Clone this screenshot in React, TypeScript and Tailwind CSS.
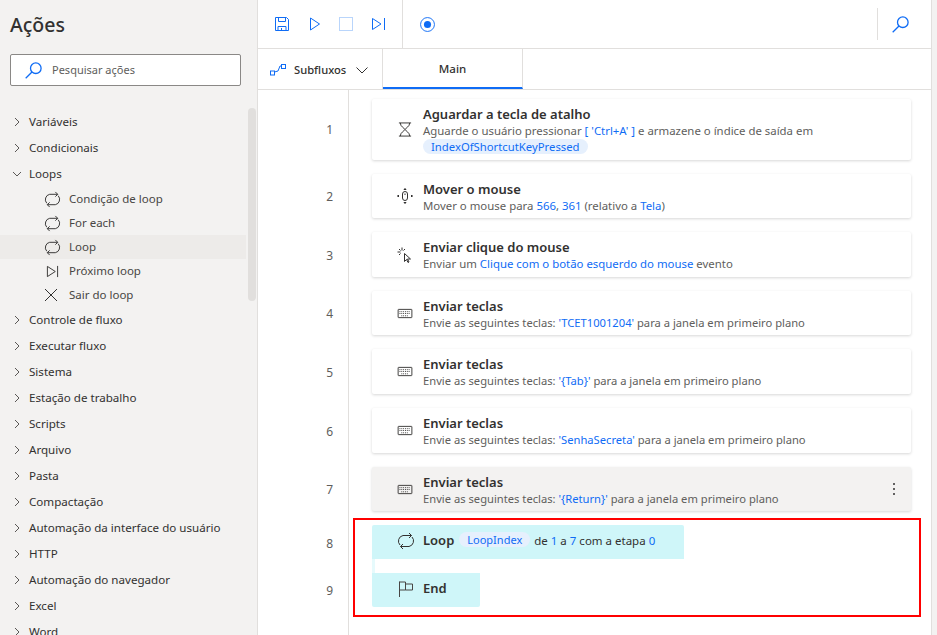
import type { ReactNode } from "react";

const LoopIcon = ({ className = "" }: { className?: string }) => (
  <svg viewBox="0 0 18 18" fill="none" stroke="currentColor" strokeWidth="1" className={className}>
    <path d="M3 13A5.700 5.700 0 0 1 6 3.500H14.500" />
    <path d="M12 1l2.500 2.500L12 6" />
    <path d="M15 5A5.700 5.700 0 0 1 12 14.500H3.500" />
    <path d="M6 12l-2.500 2.500L6 17" />
  </svg>
);

const SearchIcon = ({ className = "" }: { className?: string }) => (
  <svg viewBox="0 0 17 17" fill="none" stroke="#0f6cf5" strokeWidth="1.300" className={className}>
    <circle cx="10.800" cy="6.200" r="5.300" />
    <path d="M7 10L0.700 16.300" />
  </svg>
);

const KeyboardIcon = () => (
  <svg viewBox="0 0 16 12" fill="none" stroke="#323130" strokeWidth="1" className="h-[11px] w-[16px]">
    <rect x="0.500" y="1.500" width="15" height="9" rx="0.500" />
    <path d="M2 4h12M2 6h12M4 8.500h8" strokeDasharray="1 1" />
  </svg>
);

const HourglassIcon = () => (
  <svg viewBox="0 0 14 16" fill="none" stroke="#323130" strokeWidth="1" className="h-[15px] w-[14px]">
    <path d="M0.500 1h13M0.500 15h13M2 1c0 4 4 5 5 7 1-2 5-3 5-7M2 15c0-4 4-5 5-7 1 2 5 3 5 7" />
  </svg>
);

const MoveIcon = () => (
  <svg viewBox="0 0 16 16" fill="none" stroke="#323130" strokeWidth="1" className="h-[16px] w-[16px]">
    <rect x="5.500" y="3.500" width="5" height="9" rx="2.500" />
    <path d="M8 5.500v1.500" />
    <path d="M8 0.500l-1 1h2zM8 15.500l-1-1h2zM0.500 8l1-1v2zM15.500 8l-1-1v2z" fill="#323130" />
  </svg>
);

const ClickIcon = () => (
  <svg viewBox="0 0 16 16" fill="none" stroke="#323130" strokeWidth="1" className="h-[16px] w-[16px]">
    <path d="M7.500 6.500v8l2-2 1.500 3 1-.5-1.500-3h3z" />
    <path d="M5 0.500v3M0.500 5h3M2 2l1.500 1.500M8 2L6.500 3.500M2 8l1.500-1.500" />
  </svg>
);

const FlagIcon = () => (
  <svg viewBox="0 0 16 16" fill="none" stroke="#484644" strokeWidth="1" className="h-[16px] w-[16px]">
    <path d="M1.500 0.500v15.500M1.500 1h6v8h-6M7.500 3h7v6h-7" />
  </svg>
);

const V = ({ children }: { children: ReactNode }) => <span className="text-[#0f6cf5]">{children}</span>;

const Pill = ({ children }: { children: ReactNode }) => (
  <span className="inline-block rounded-full bg-[#e6f0fd] px-2 leading-[15px] text-[#0f6cf5]">{children}</span>
);

const Group = ({ label, open }: { label: string; open?: boolean }) => (
  <div className="flex h-[26px] items-center text-[11.600px] text-[#323130]">
    <span className="flex w-[29px] pl-[12px]">
      <svg viewBox="0 0 10 10" fill="none" stroke="#484644" strokeWidth="0.900" className="h-[10px] w-[10px]">
        {open ? <path d="M1 3l4 4 4-4" /> : <path d="M3 1l4 4-4 4" />}
      </svg>
    </span>
    {label}
  </div>
);

const SubItem = ({ label, icon, active }: { label: string; icon: ReactNode; active?: boolean }) => (
  <div className={`flex h-[24px] w-[246px] items-center text-[11.500px] text-[#484644] ${active ? "bg-[#edebe9]" : ""}`}>
    <span className="ml-[44px] flex w-[25px] shrink-0 items-center">{icon}</span>
    {label}
  </div>
);

const Card = ({
  num,
  icon,
  title,
  children,
  height = "h-[45px]",
  numPad = "pb-[12px]",
  selected,
}: {
  num: number;
  icon: ReactNode;
  title: string;
  children: ReactNode;
  height?: string;
  numPad?: string;
  selected?: boolean;
}) => (
  <div className="flex">
    <div className={`flex w-[75px] items-center justify-end text-[12px] text-[#605e5c] ${numPad}`}>{num}</div>
    <div className="ml-[15px] border-l border-[#e1dfdd] pb-[14px] pl-[23px]">
      <div
        className={`relative flex w-[539px] rounded-[2px] shadow-[0_1px_3px_rgba(0,0,0,0.16)] ${height} ${selected ? "bg-[#f3f2f1]" : "bg-white"}`}
      >
        <div className="flex w-[51px] shrink-0 items-center justify-center pl-[14px]">{icon}</div>
        <div className="pt-[7px]">
          <div className="text-[13px] leading-[16px] font-semibold text-[#323130]">{title}</div>
          <div className="mt-[1px] text-[11.400px] leading-[16px] text-[#605e5c]">{children}</div>
        </div>
        {selected && (
          <div className="absolute top-[16px] right-[16px] flex flex-col gap-[3px]">
            <span className="h-[2px] w-[2px] rounded-full bg-[#323130]" />
            <span className="h-[2px] w-[2px] rounded-full bg-[#323130]" />
            <span className="h-[2px] w-[2px] rounded-full bg-[#323130]" />
          </div>
        )}
      </div>
    </div>
  </div>
);

const sendKeys = [
  { num: 4, value: "'TCET1001204'", height: "h-[44px]" },
  { num: 5, value: "'{Tab}'", height: "h-[45px]" },
  { num: 6, value: "'SenhaSecreta'", height: "h-[45px]" },
  { num: 7, value: "'{Return}'", height: "h-[44px]", selected: true },
];

const groupsAfter = [
  "Controle de fluxo",
  "Executar fluxo",
  "Sistema",
  "Estação de trabalho",
  "Scripts",
  "Arquivo",
  "Pasta",
  "Compactação",
  "Automação da interface do usuário",
  "HTTP",
  "Automação do navegador",
  "Excel",
  "Word",
];

export default function App() {
  return (
    <div className="flex h-[635px] w-[937px] overflow-hidden bg-white font-['Noto_Sans','Open_Sans',sans-serif]">
      {/* sidebar */}
      <aside className="relative h-full w-[258px] shrink-0 overflow-hidden border-r border-[#e1dfdd] bg-[#f3f2f1]">
        <h1 className="pt-[11px] pl-[10px] text-[19.500px] leading-[28px] font-medium text-[#323130]">Ações</h1>
        <div className="mt-[15px] ml-[10px] flex h-[32px] w-[231px] items-center rounded-[2px] border border-[#8a8886] bg-white">
          <SearchIcon className="ml-[14px] h-[17px] w-[17px]" />
          <span className="ml-[10px] text-[11px] text-[#605e5c]">Pesquisar ações</span>
        </div>
        <div className="pt-[23px]">
          <Group label="Variáveis" />
          <Group label="Condicionais" />
          <Group label="Loops" open />
          <SubItem label="Condição de loop" icon={<LoopIcon className="h-[17px] w-[17px] text-[#323130]" />} />
          <SubItem label="For each" icon={<LoopIcon className="h-[17px] w-[17px] text-[#323130]" />} />
          <SubItem label="Loop" active icon={<LoopIcon className="h-[17px] w-[17px] text-[#323130]" />} />
          <SubItem
            label="Próximo loop"
            icon={
              <svg viewBox="0 0 14 14" fill="none" stroke="#323130" className="ml-[2px] h-[13px] w-[13px]">
                <path d="M1.500 1.500L10 7l-8.500 5.500zM12.500 1v12" />
              </svg>
            }
          />
          <SubItem
            label="Sair do loop"
            icon={
              <svg viewBox="0 0 14 14" fill="none" stroke="#323130" className="h-[14px] w-[14px]">
                <path d="M1 1l12 12M13 1L1 13" />
              </svg>
            }
          />
          {groupsAfter.map((g) => (
            <Group key={g} label={g} />
          ))}
        </div>
        <div className="absolute top-[108px] left-[248px] h-[193px] w-[8px] rounded-full bg-[#e1dfdd]" />
      </aside>

      {/* main */}
      <main className="relative flex min-w-0 flex-1 flex-col">
        {/* toolbar */}
        <div className="flex h-[49px] shrink-0 items-center border-b border-[#e1dfdd] pr-[6px]">
          <div className="flex h-full items-center border-r border-[#e1dfdd] pr-[17px] pl-[17px]">
            <svg viewBox="0 0 14 14" fill="none" stroke="#0f6cf5" className="h-[14px] w-[14px]">
              <path d="M0.500 0.500h11l2 2v11h-13zM3.500 0.500v4h7v-4M3 13.500v-4h8v4M6.500 11v2.500" />
            </svg>
            <svg viewBox="0 0 10 14" fill="none" stroke="#0f6cf5" className="ml-[21px] h-[14px] w-[10px]">
              <path d="M0.500 1v12l9-6z" />
            </svg>
            <span className="ml-[19px] h-[14px] w-[14px] border border-[#b9d5fb]" />
            <svg viewBox="0 0 13 14" fill="none" stroke="#0f6cf5" className="ml-[19px] h-[14px] w-[13px]">
              <path d="M0.500 1.500L9 7l-8.500 5.500zM12.500 1v12" />
            </svg>
          </div>
          <svg viewBox="0 0 16 16" fill="none" className="ml-[17px] h-[15px] w-[15px]">
            <circle cx="8" cy="8" r="7.400" stroke="#0f6cf5" />
            <circle cx="8" cy="8" r="3.800" fill="#0f6cf5" />
          </svg>
          <div className="ml-auto flex h-[32px] w-[54px] items-center border-l border-[#e1dfdd] pl-[14px]">
            <SearchIcon className="h-[17px] w-[17px]" />
          </div>
        </div>

        {/* tabs */}
        <div className="flex h-[41px] shrink-0 border-b border-[#e1dfdd]">
          <div className="flex w-[125px] items-center border-r border-[#e1dfdd] pt-[2px] pl-[12px]">
            <svg viewBox="0 0 16 12" fill="none" stroke="#0f6cf5" className="h-[12px] w-[16px]">
              <rect x="0.500" y="7" width="4" height="4" />
              <rect x="11.500" y="0.500" width="4" height="4" />
              <path d="M4.500 8L8 7l2-5 1.500 0" />
            </svg>
            <span className="ml-[8px] text-[11.200px] font-medium text-[#323130]">Subfluxos</span>
            <svg viewBox="0 0 12 7" fill="none" stroke="#323130" className="ml-[10px] h-[7px] w-[12px]">
              <path d="M0.500 0.500L6 6l5.500-5.500" />
            </svg>
          </div>
          <div className="flex w-[140px] items-center justify-center border-r border-b-[2px] border-[#e1dfdd] border-b-[#0f6cf5] pt-[2px] text-[11.500px] font-medium text-[#323130]">
            Main
          </div>
        </div>

        {/* flow */}
        <div className="flex-1 overflow-hidden">
          <div className="ml-[90px] h-[9px] border-l border-[#e1dfdd]" />
          <Card num={1} height="h-[61px]" numPad="pb-[14px]" icon={<HourglassIcon />} title="Aguardar a tecla de atalho">
            Aguarde o usuário pressionar <V>[ 'Ctrl+A' ]</V> e armazene o índice de saída em
            <br />
            <span className="text-[11.300px]">
              <Pill>IndexOfShortcutKeyPressed</Pill>
            </span>
          </Card>
          <Card num={2} height="h-[44px]" icon={<MoveIcon />} title="Mover o mouse">
            Mover o mouse para <V>566</V>, <V>361</V> (relativo a <V>Tela</V>)
          </Card>
          <Card num={3} icon={<ClickIcon />} title="Enviar clique do mouse">
            Enviar um <V>Clique com o botão esquerdo do mouse</V> evento
          </Card>
          {sendKeys.map((k) => (
            <Card key={k.num} num={k.num} height={k.height} icon={<KeyboardIcon />} title="Enviar teclas" selected={k.selected}>
              <span className="text-[11.200px]">
                Envie as seguintes teclas: <V>{k.value}</V> para a janela em primeiro plano
              </span>
            </Card>
          ))}

          {/* loop block */}
          <div className="flex">
            <div className="flex h-[34px] w-[75px] items-center justify-end pt-[4px] text-[12px] text-[#605e5c]">8</div>
            <div className="ml-[15px] border-l border-[#e1dfdd] pl-[23px]">
              <div className="flex h-[34px] w-[312px] items-center rounded-t-[2px] bg-[#cff6f9] pb-[3px] pl-[25px] text-[11.500px] text-[#323130]">
                <LoopIcon className="h-[18px] w-[18px] text-[#323130]" />
                <span className="mr-[5px] ml-[8px] text-[13px] font-semibold">Loop</span>
                <span className="text-[11px]">
                  <Pill>LoopIndex</Pill>
                </span>
                <span className="ml-[4px]">
                  de <V>1</V> a <V>7</V> com a etapa <V>0</V>
                </span>
              </div>
              <div className="h-[14px] w-[3px] bg-[#e6fafc]" />
            </div>
          </div>
          <div className="flex">
            <div className="flex h-[34px] w-[75px] items-center justify-end pt-[2px] text-[12px] text-[#605e5c]">9</div>
            <div className="ml-[15px] h-[62px] border-l border-[#e1dfdd] pl-[23px]">
              <div className="flex h-[34px] w-[108px] items-center rounded-b-[2px] bg-[#cff6f9] pb-[3px] pl-[26px]">
                <FlagIcon />
                <span className="ml-[9px] text-[13px] font-semibold text-[#323130]">End</span>
              </div>
            </div>
          </div>
        </div>

        {/* highlight drawn over the flow */}
        <div className="absolute top-[518px] left-[95px] h-[99px] w-[568px] border-[2px] border-[#ff0000]" />
        <div className="absolute top-0 right-0 h-full w-[6px] border-l border-[#e1dfdd] bg-[#f3f2f1]" />
      </main>
    </div>
  );
}
